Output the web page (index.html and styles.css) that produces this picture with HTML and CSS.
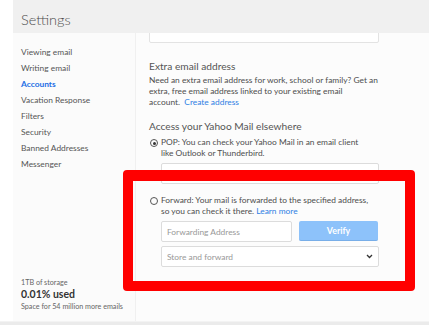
FILE: index.html
```html
<!DOCTYPE html>
<html lang="en">
<head>
    <meta charset="UTF-8">
    <meta name="viewport" content="width=device-width, initial-scale=1.0">
    <title>Settings</title>
    <link rel="stylesheet" href="styles.css">
</head>
<body>

    <div class="settings">
        <div class="settings-header">
            <h1>Settings</h1>
        </div>

        <div class="settings-body">
            <!-- Left navigation -->
            <div class="sidebar">
                <ul class="nav">
                    <li>Viewing email</li>
                    <li>Writing email</li>
                    <li class="active">Accounts</li>
                    <li>Vacation Response</li>
                    <li>Filters</li>
                    <li>Security</li>
                    <li>Banned Addresses</li>
                    <li>Messenger</li>
                </ul>

                <div class="storage">
                    <p class="storage-small">1TB of storage</p>
                    <p class="storage-used">0.01% used</p>
                    <p class="storage-small">Space for 54 million more emails</p>
                </div>
            </div>

            <!-- Accounts panel -->
            <div class="panel">
                <div class="tail-box"></div>

                <h2>Extra email address</h2>
                <p class="text">Need an extra email address for work, school or family? Get an extra, free email address linked to your existing email<br>account. &nbsp;<a href="#">Create address</a></p>

                <h2 class="access">Access your Yahoo Mail elsewhere</h2>

                <div class="option">
                    <span class="radio checked"></span>
                    <p class="text">POP: You can check your Yahoo Mail in an email client<br>like Outlook or Thunderbird.</p>
                </div>
                <div class="field pop-field"></div>

                <div class="forward">
                    <div class="option">
                        <span class="radio"></span>
                        <p class="text">Forward: Your mail is forwarded to the specified address, so you can check it there. <a href="#">Learn more</a></p>
                    </div>
                    <div class="forward-row">
                        <input type="text" class="field address" placeholder="Forwarding Address">
                        <button class="verify">Verify</button>
                    </div>
                    <div class="field select">
                        <span>Store and forward</span>
                        <svg width="7" height="5" viewBox="0 0 7 5"><path d="M1 1l2.5 2.5L6 1" fill="none" stroke="#333" stroke-width="1.3"/></svg>
                    </div>
                    <div class="highlight"></div>
                </div>
            </div>
        </div>
    </div>
    <div class="footer-band"></div>

</body>
</html>
```
FILE: styles.css
```css
/* General styles */
body {
    margin: 0;
    padding: 0;
    font-family: Lato, "Open Sans", sans-serif;
    color: #4d4d4d;
    background: #fff;
    width: 429px;
    height: 325px;
    overflow: hidden;
}

.settings {
    margin-left: 13px;
    height: 321px;
    display: flex;
    flex-direction: column;
    background: #fcfcfc;
}

.settings-header {
    height: 33px;
    flex-shrink: 0;
    background: #f0f0f0;
    position: relative;
    z-index: 2;
}

.settings-header h1 {
    margin: 0;
    padding: 9px 0 0 8px;
    font-size: 14.5px;
    line-height: 22px;
    font-weight: 300;
    color: #4d4d4d;
}

.settings-body {
    flex: 1;
    display: flex;
    min-height: 0;
}

/* Sidebar */
.sidebar {
    width: 122px;
    border-right: 1px solid #f0f0f0;
    display: flex;
    flex-direction: column;
    justify-content: space-between;
    background: #fbfbfb;
}

.nav {
    list-style: none;
    margin: 0;
    padding: 11px 0 0 8px;
}

.nav li {
    font-size: 8.4px;
    line-height: 16px;
    color: #555;
}

.nav li.active {
    color: #1f6fe5;
    font-weight: bold;
}

.storage {
    padding: 0 0 9px 8px;
}

.storage p {
    margin: 0;
}

.storage-small {
    font-size: 7.2px;
    line-height: 11px;
    color: #666;
}

.storage-used {
    font-size: 10.5px;
    line-height: 13px;
    font-weight: bold;
    color: #333;
}

/* Panel */
.panel {
    flex: 1;
    padding-left: 13px;
}

.tail-box {
    width: 228px;
    height: 10px;
    margin-top: -2px;
    border: 1px solid #e3e3e3;
    border-radius: 0 0 2px 2px;
    background: #fff;
}

h2 {
    margin: 16px 0 2px;
    font-size: 10.2px;
    line-height: 14px;
    font-weight: normal;
    color: #555;
}

h2.access {
    margin-top: 11px;
    margin-bottom: 4px;
}

.text {
    margin: 0;
    width: 232px;
    font-size: 8.4px;
    line-height: 11px;
    color: #4d4d4d;
}

.text a {
    color: #2f80e4;
    text-decoration: none;
}

.option {
    display: flex;
    align-items: flex-start;
    gap: 3px;
}

.option .text {
    width: 216px;
}

.radio {
    width: 6px;
    height: 6px;
    margin: 2px 0 0 1px;
    flex-shrink: 0;
    border: 1px solid #555;
    border-radius: 50%;
    display: flex;
    align-items: center;
    justify-content: center;
}

.radio.checked::after {
    content: "";
    width: 3px;
    height: 3px;
    border-radius: 50%;
    background: #333;
}

.field {
    box-sizing: border-box;
    height: 21px;
    border: 1px solid #dcdcdc;
    border-radius: 2px;
    background: #fff;
}

.pop-field {
    width: 218px;
    margin: 4px 0 0 12px;
}

/* Forward section */
.forward {
    position: relative;
    margin-top: 11px;
}

.forward-row {
    display: flex;
    gap: 7px;
    margin: 4px 0 0 12px;
}

.address {
    width: 131px;
    padding: 0 5px;
    font-family: inherit;
    font-size: 8.4px;
    color: #333;
    outline: none;
}

.address::placeholder {
    color: #999;
}

.verify {
    width: 79px;
    height: 20px;
    padding: 0;
    border: none;
    border-bottom: 1px solid #78aee8;
    border-radius: 2px;
    background: #8dc2fa;
    color: #fff;
    font-family: inherit;
    font-size: 8.8px;
    font-weight: bold;
}

.select {
    width: 218px;
    margin: 4px 0 0 12px;
    padding: 0 5px;
    display: flex;
    align-items: center;
    justify-content: space-between;
    font-size: 8.4px;
    color: #999;
}

/* Red annotation frame */
.highlight {
    position: absolute;
    left: -26px;
    top: -25px;
    width: 272px;
    height: 100px;
    border: 10px solid #ff0000;
    border-top-width: 11px;
    border-radius: 4px;
    pointer-events: none;
}

.footer-band {
    height: 4px;
    background: #ebebeb;
    border-top: 1px solid #f3f3f3;
    box-sizing: border-box;
}
```
